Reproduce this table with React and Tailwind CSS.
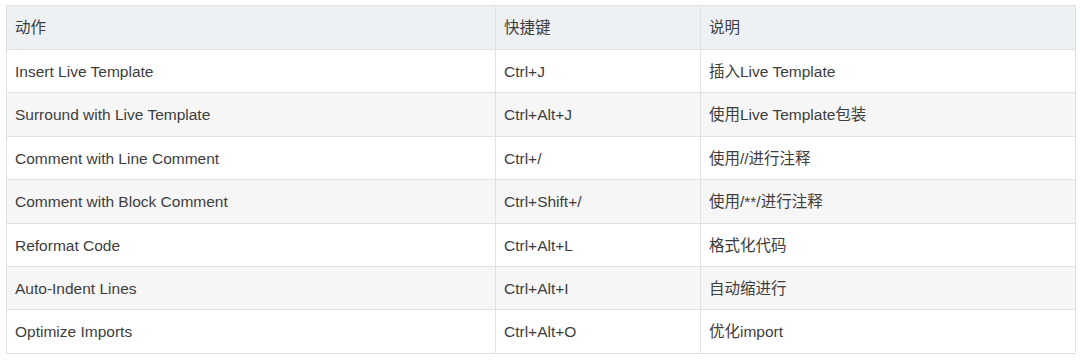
const rows = [
  ["Insert Live Template", "Ctrl+J", "插入Live Template"],
  ["Surround with Live Template", "Ctrl+Alt+J", "使用Live Template包装"],
  ["Comment with Line Comment", "Ctrl+/", "使用//进行注释"],
  ["Comment with Block Comment", "Ctrl+Shift+/", "使用/**/进行注释"],
  ["Reformat Code", "Ctrl+Alt+L", "格式化代码"],
  ["Auto-Indent Lines", "Ctrl+Alt+I", "自动缩进行"],
  ["Optimize Imports", "Ctrl+Alt+O", "优化import"],
];

const font = {
  fontFamily: '"Liberation Sans", Arial, "Noto Sans CJK SC", sans-serif',
};

const App = () => {
  return (
    <div className="w-[1080px] h-[363px] bg-white pt-[5px] pl-[6px]" style={font}>
      <table className="w-[1070px] border-collapse text-[15.5px] text-[#3d3d3d]">
        <thead>
          <tr className="bg-[#eef1f4] h-[44px]">
            <th className="w-[489px] border border-[#dfe2e5] px-[8px] text-left font-normal">动作</th>
            <th className="w-[205px] border border-[#dfe2e5] px-[8px] text-left font-normal">快捷键</th>
            <th className="border border-[#dfe2e5] px-[8px] text-left font-normal">说明</th>
          </tr>
        </thead>
        <tbody>
          {rows.map((r, i) => (
            <tr key={i} className={(i % 2 === 1 ? "bg-[#f6f6f6]" : "bg-white") + " h-[43.4px]"}>
              <td className="border border-[#dfe2e5] px-[8px] pt-[1px]">{r[0]}</td>
              <td className="border border-[#dfe2e5] px-[8px] pt-[1px]">{r[1]}</td>
              <td className="border border-[#dfe2e5] px-[8px] pt-[1px]">{r[2]}</td>
            </tr>
          ))}
        </tbody>
      </table>
    </div>
  );
};

export default App;
